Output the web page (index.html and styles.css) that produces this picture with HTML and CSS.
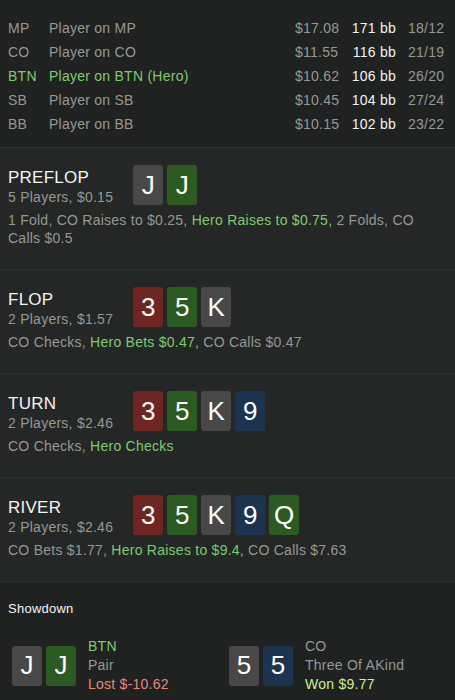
FILE: index.html
```html
<!DOCTYPE html>
<html>
<head>
    <title>Hand Replay</title>
    <link rel="stylesheet" href="styles.css">
</head>
<body>
    <div class="players">
        <div class="player">
            <span>MP</span><span>Player on MP</span><span>$17.08</span><span class="bb">171 bb</span><span class="ratio">18/12</span>
        </div>
        <div class="player">
            <span>CO</span><span>Player on CO</span><span>$11.55</span><span class="bb">116 bb</span><span class="ratio">21/19</span>
        </div>
        <div class="player hero">
            <span class="pos">BTN</span><span class="name">Player on BTN (Hero)</span><span>$10.62</span><span class="bb">106 bb</span><span class="ratio">26/20</span>
        </div>
        <div class="player">
            <span>SB</span><span>Player on SB</span><span>$10.45</span><span class="bb">104 bb</span><span class="ratio">27/24</span>
        </div>
        <div class="player">
            <span>BB</span><span>Player on BB</span><span>$10.15</span><span class="bb">102 bb</span><span class="ratio">23/22</span>
        </div>
    </div>

    <div class="street">
        <div class="street-head">
            <div>
                <div class="street-name">PREFLOP</div>
                <div class="street-info">5 Players, $0.15</div>
            </div>
            <div class="cards">
                <div class="card gray">J</div>
                <div class="card green">J</div>
            </div>
        </div>
        <div class="actions">1 Fold, CO Raises to $0.25, <span class="hero-act">Hero Raises to $0.75,</span> 2 Folds, CO Calls $0.5</div>
    </div>

    <div class="street">
        <div class="street-head">
            <div>
                <div class="street-name">FLOP</div>
                <div class="street-info">2 Players, $1.57</div>
            </div>
            <div class="cards">
                <div class="card red">3</div>
                <div class="card green">5</div>
                <div class="card gray">K</div>
            </div>
        </div>
        <div class="actions">CO Checks, <span class="hero-act">Hero Bets $0.47,</span> CO Calls $0.47</div>
    </div>

    <div class="street">
        <div class="street-head">
            <div>
                <div class="street-name">TURN</div>
                <div class="street-info">2 Players, $2.46</div>
            </div>
            <div class="cards">
                <div class="card red">3</div>
                <div class="card green">5</div>
                <div class="card gray">K</div>
                <div class="card blue">9</div>
            </div>
        </div>
        <div class="actions">CO Checks, <span class="hero-act">Hero Checks</span></div>
    </div>

    <div class="street">
        <div class="street-head">
            <div>
                <div class="street-name">RIVER</div>
                <div class="street-info">2 Players, $2.46</div>
            </div>
            <div class="cards">
                <div class="card red">3</div>
                <div class="card green">5</div>
                <div class="card gray">K</div>
                <div class="card blue">9</div>
                <div class="card green">Q</div>
            </div>
        </div>
        <div class="actions">CO Bets $1.77, <span class="hero-act">Hero Raises to $9.4,</span> CO Calls $7.63</div>
    </div>

    <div class="showdown">
        <div class="showdown-title">Showdown</div>
        <div class="hands">
            <div class="hand">
                <div class="cards">
                    <div class="card gray">J</div>
                    <div class="card green">J</div>
                </div>
                <div class="hand-info">
                    <div class="hero-act">BTN</div>
                    <div>Pair</div>
                    <div class="lost">Lost $-10.62</div>
                </div>
            </div>
            <div class="hand">
                <div class="cards">
                    <div class="card gray">5</div>
                    <div class="card blue">5</div>
                </div>
                <div class="hand-info">
                    <div>CO</div>
                    <div>Three Of AKind</div>
                    <div class="won">Won $9.77</div>
                </div>
            </div>
        </div>
    </div>
</body>
</html>
```

FILE: styles.css
```css
body {
    margin: 0;
    background-color: #1f2220;
    font-family: "Liberation Sans", Arial, sans-serif;
    font-size: 14px;
    letter-spacing: 0.25px;
    color: #969896;
}
.players {
    padding: 16px 8px 11px;
    border-bottom: 1px solid #2e312f;
}
.player {
    display: grid;
    grid-template-columns: 41px 1fr 51px 50px 51px;
    height: 24px;
    align-items: center;
}
.player .bb {
    color: #f2f2f2;
    text-align: right;
}
.player .ratio {
    padding-left: 12px;
}
.player.hero .pos,
.player.hero .name {
    color: #7dcc6c;
}
.street {
    background-color: #242725;
    padding: 17px 8px 22px;
    border-bottom: 1px solid #2e312f;
}
.street-head {
    display: flex;
    gap: 20px;
    align-items: flex-start;
}
.street-name {
    color: #f4f4f4;
    font-size: 17px;
    line-height: 21px;
    margin-top: 2px;
}
.street-info {
    line-height: 18px;
}
.actions {
    margin-top: 5px;
    line-height: 18px;
}
.hero-act {
    color: #7dcc6c;
}
.cards {
    display: flex;
    gap: 4px;
}
.card {
    width: 30px;
    height: 40px;
    border-radius: 3px;
    color: #ffffff;
    font-size: 26px;
    letter-spacing: 0;
    display: flex;
    align-items: center;
    justify-content: center;
}
.gray {
    background-color: #484848;
}
.green {
    background-color: #2c5b22;
}
.red {
    background-color: #6f2522;
}
.blue {
    background-color: #1c3450;
}
.showdown {
    padding: 19px 8px 0;
}
.showdown-title {
    color: #f4f4f4;
    font-size: 13px;
}
.hands {
    display: grid;
    grid-template-columns: 217px 1fr;
    padding: 21px 0 0 4px;
}
.hand {
    display: flex;
    gap: 12px;
    align-items: center;
}
.hand-info {
    line-height: 19px;
}
.lost {
    color: #e8877a;
}
.won {
    color: #cdef8f;
}
```
